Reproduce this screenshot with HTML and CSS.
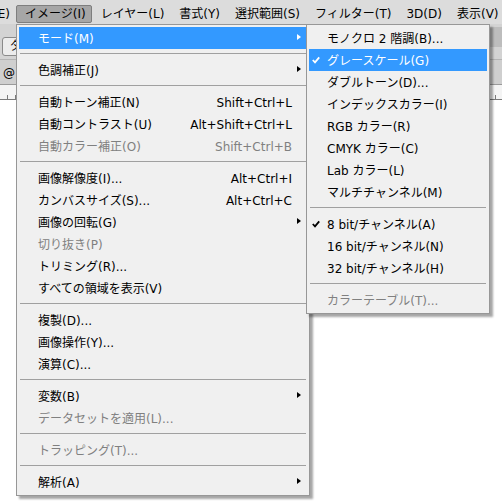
FILE: index.html
```html
<!DOCTYPE html>
<html lang="ja">
<head>
<meta charset="utf-8">
<title>イメージ メニュー</title>
<link rel="stylesheet" href="styles.css">
</head>
<body>
<div class="app">
  <div class="menubar">
    <span class="mb-item">編集(E)</span>
    <span class="mb-item active">イメージ(I)</span>
    <span class="mb-item">レイヤー(L)</span>
    <span class="mb-item">書式(Y)</span>
    <span class="mb-item">選択範囲(S)</span>
    <span class="mb-item">フィルター(T)</span>
    <span class="mb-item">3D(D)</span>
    <span class="mb-item">表示(V)</span>
  </div>
  <div class="optionsbar">
    <span class="optbtn">ダ</span>
    <span class="optright"></span>
  </div>
  <div class="tabbar"><span class="tab">@</span></div>
  <div class="ruler"></div>
  <div class="canvas"></div>
</div>

<div class="menu main">
  <div class="mi hl"><span class="lbl">モード(M)</span><span class="sc"></span><span class="arr"><i class="tri"></i></span></div>
  <div class="sep"></div>
  <div class="mi"><span class="lbl">色調補正(J)</span><span class="sc"></span><span class="arr"><i class="tri"></i></span></div>
  <div class="sep"></div>
  <div class="mi"><span class="lbl">自動トーン補正(N)</span><span class="sc">Shift+Ctrl+L</span><span class="arr"></span></div>
  <div class="mi"><span class="lbl">自動コントラスト(U)</span><span class="sc">Alt+Shift+Ctrl+L</span><span class="arr"></span></div>
  <div class="mi dis"><span class="lbl">自動カラー補正(O)</span><span class="sc">Shift+Ctrl+B</span><span class="arr"></span></div>
  <div class="sep"></div>
  <div class="mi"><span class="lbl">画像解像度(I)...</span><span class="sc">Alt+Ctrl+I</span><span class="arr"></span></div>
  <div class="mi"><span class="lbl">カンバスサイズ(S)...</span><span class="sc">Alt+Ctrl+C</span><span class="arr"></span></div>
  <div class="mi"><span class="lbl">画像の回転(G)</span><span class="sc"></span><span class="arr"><i class="tri"></i></span></div>
  <div class="mi dis"><span class="lbl">切り抜き(P)</span><span class="sc"></span><span class="arr"></span></div>
  <div class="mi"><span class="lbl">トリミング(R)...</span><span class="sc"></span><span class="arr"></span></div>
  <div class="mi"><span class="lbl">すべての領域を表示(V)</span><span class="sc"></span><span class="arr"></span></div>
  <div class="sep"></div>
  <div class="mi"><span class="lbl">複製(D)...</span><span class="sc"></span><span class="arr"></span></div>
  <div class="mi"><span class="lbl">画像操作(Y)...</span><span class="sc"></span><span class="arr"></span></div>
  <div class="mi"><span class="lbl">演算(C)...</span><span class="sc"></span><span class="arr"></span></div>
  <div class="sep"></div>
  <div class="mi"><span class="lbl">変数(B)</span><span class="sc"></span><span class="arr"><i class="tri"></i></span></div>
  <div class="mi dis"><span class="lbl">データセットを適用(L)...</span><span class="sc"></span><span class="arr"></span></div>
  <div class="sep"></div>
  <div class="mi dis"><span class="lbl">トラッピング(T)...</span><span class="sc"></span><span class="arr"></span></div>
  <div class="sep"></div>
  <div class="mi"><span class="lbl">解析(A)</span><span class="sc"></span><span class="arr"><i class="tri"></i></span></div>
</div>

<div class="menu sub">
  <div class="si"><span class="ck"></span><span class="lbl">モノクロ 2 階調(B)...</span></div>
  <div class="si hl"><span class="ck"><svg class="check" width="8" height="8" viewBox="0 0 8 8"><polyline points="0.8,4 3,6.4 7.2,1.4"/></svg></span><span class="lbl">グレースケール(G)</span></div>
  <div class="si"><span class="ck"></span><span class="lbl">ダブルトーン(D)...</span></div>
  <div class="si"><span class="ck"></span><span class="lbl">インデックスカラー(I)</span></div>
  <div class="si"><span class="ck"></span><span class="lbl">RGB カラー(R)</span></div>
  <div class="si"><span class="ck"></span><span class="lbl">CMYK カラー(C)</span></div>
  <div class="si"><span class="ck"></span><span class="lbl">Lab カラー(L)</span></div>
  <div class="si"><span class="ck"></span><span class="lbl">マルチチャンネル(M)</span></div>
  <div class="sep"></div>
  <div class="si"><span class="ck"><svg class="check" width="8" height="8" viewBox="0 0 8 8"><polyline points="0.8,4 3,6.4 7.2,1.4"/></svg></span><span class="lbl">8 bit/チャンネル(A)</span></div>
  <div class="si"><span class="ck"></span><span class="lbl">16 bit/チャンネル(N)</span></div>
  <div class="si"><span class="ck"></span><span class="lbl">32 bit/チャンネル(H)</span></div>
  <div class="sep"></div>
  <div class="si dis"><span class="ck"></span><span class="lbl">カラーテーブル(T)...</span></div>
</div>
</body>
</html>
```

FILE: styles.css
```css
html, body {
  margin: 0;
  padding: 0;
}
body {
  width: 502px;
  height: 504px;
  overflow: hidden;
  position: relative;
  background: #ffffff;
  font-family: "DejaVu Sans", "Noto Sans CJK JP", sans-serif;
  font-size: 12px;
  color: #000;
}

/* ---------- background application ---------- */
.app {
  display: flex;
  flex-direction: column;
  height: 504px;
}
.menubar {
  display: flex;
  align-items: flex-start;
  height: 24px;
  margin-left: -40px;
  background: #dcdcdc;
  white-space: nowrap;
}
.mb-item {
  flex: none;
  box-sizing: border-box;
  height: 18px;
  margin-top: 5px;
  padding: 0 5px 0 8px;
  line-height: 16px;
  border: 1px solid transparent;
  border-radius: 2px;
}
.mb-item.active {
  background: #a6a6a6;
  border-color: #7e7e7e;
}
.optionsbar {
  display: flex;
  justify-content: space-between;
  align-items: flex-start;
  height: 36px;
  box-sizing: border-box;
  background: #d3d3d3;
  border-bottom: 1px solid #b4b4b4;
}
.optbtn {
  margin: 13px 0 0 2px;
  width: 40px;
  height: 19px;
  box-sizing: border-box;
  padding-left: 7px;
  line-height: 17px;
  background: #ececec;
  border: 1px solid #8a8a8a;
  border-radius: 3px;
}
.optright {
  width: 12px;
  height: 20px;
  margin-top: 3px;
  background: #bdbdbd;
}
.tabbar {
  height: 25px;
  box-sizing: border-box;
  background: #cfcfcf;
  border-bottom: 1px solid #9a9a9a;
  padding: 6px 0 0 3px;
}
.tab {
  font-size: 12px;
  line-height: 14px;
}
.ruler {
  height: 15px;
  box-sizing: border-box;
  background:
    repeating-linear-gradient(90deg, transparent 0 7px, #7a7a7a 7px 8px) bottom left / 100% 4px no-repeat,
    #f4f4f4;
  border-bottom: 1px solid #7a7a7a;
}
.canvas {
  flex: 1;
  background: #ffffff;
}

/* ---------- menus ---------- */
.menu {
  position: absolute;
  top: 24px;
  box-sizing: border-box;
  background: #f0f0f0;
  border: 1px solid #979797;
  padding: 2px;
  box-shadow: 3px 3px 2px rgba(0, 0, 0, 0.35);
  white-space: nowrap;
}
.menu.main {
  left: 16px;
  width: 294px;
}
.menu.sub {
  left: 306px;
  width: 184px;
}
.mi, .si {
  display: flex;
  align-items: center;
  height: 22px;
  line-height: 16px;
}
.mi {
  padding-left: 19px;
}
.lbl {
  flex: 1;
  padding-top: 1px;
}
.sc {
  flex: none;
  padding-top: 1px;
}
.arr {
  flex: none;
  width: 15px;
  box-sizing: border-box;
  padding-left: 5px;
  display: flex;
  align-items: center;
}
.tri {
  display: block;
  width: 0;
  height: 0;
  margin-top: -3px;
  border-left: 4px solid #000;
  border-top: 3px solid transparent;
  border-bottom: 3px solid transparent;
}
.ck {
  flex: none;
  width: 18px;
  box-sizing: border-box;
  padding-left: 3px;
  display: flex;
  align-items: center;
}
.check {
  display: block;
  fill: none;
  stroke: #000;
  stroke-width: 1.8;
}
.hl {
  background: #3399ff;
  color: #ffffff;
}
.hl .tri {
  border-left-color: #ffffff;
}
.hl .check {
  stroke: #ffffff;
}
.dis {
  color: #808080;
}
.sep {
  margin: 4px 1px 5px;
  border-top: 1px solid #a0a0a0;
}
```
